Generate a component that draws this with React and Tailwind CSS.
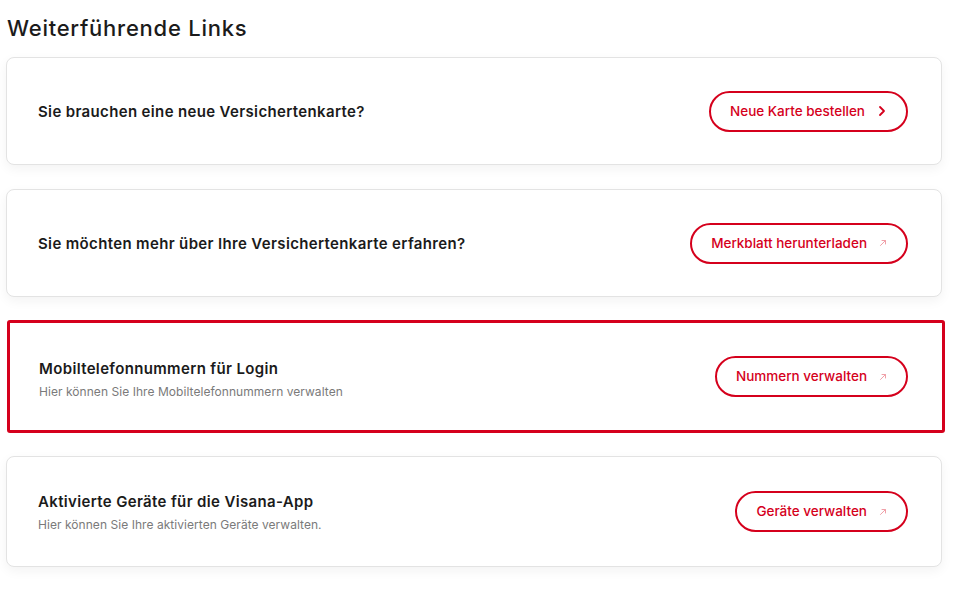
import React from "react";

const Chevron = () => (
  <svg width="10" height="12" viewBox="0 0 10 12" fill="none" className="ml-[12px]">
    <path d="M3 2 L7 6 L3 10" stroke="#d5001c" strokeWidth="1.8" strokeLinecap="round" strokeLinejoin="round" />
  </svg>
);

const External = () => (
  <svg width="8" height="8" viewBox="0 0 8 8" fill="none" className="ml-[12px]">
    <path d="M1.5 6.5 L6.5 1.5 M3 1.5 H6.5 V5" stroke="#f0a0a8" strokeWidth="1" strokeLinecap="round" />
  </svg>
);

const LinkButton = ({ label, external }) => (
  <button className="h-[41px] px-[19px] flex items-center rounded-full border-2 border-[#d5001c] bg-white text-[13.5px] font-medium text-[#d5001c] whitespace-nowrap">
    <span>{label}</span>
    {external ? <External /> : <Chevron />}
  </button>
);

const Card = ({ title, subtitle, button, external, highlight, tall }) => (
  <div
    className={
      highlight
        ? "ml-[1px] w-[938px] h-[113px] rounded-[3px] border-[3px] border-[#d5001c] bg-white flex items-center justify-between pl-[29px] pr-[34px]"
        : tall
        ? "w-[936px] h-[111px] rounded-[8px] border border-[#e3e3e3] bg-white shadow-[0_4px_12px_rgba(0,0,0,0.05)] flex items-center justify-between pl-[31px] pr-[33px]"
        : "w-[936px] h-[108px] rounded-[8px] border border-[#e3e3e3] bg-white shadow-[0_4px_12px_rgba(0,0,0,0.05)] flex items-center justify-between pl-[31px] pr-[33px]"
    }
  >
    <div className={highlight ? "flex flex-col gap-[5px] pt-[5px]" : "flex flex-col gap-[5px] pt-[1px]"}>
      <p className="text-[15px] font-semibold text-[#1b1b1b] leading-[20px] tracking-[0.35px]">{title}</p>
      {subtitle && (
        <p className="text-[12px] text-[#7a7a7a] leading-[16px] tracking-[0.05px]">{subtitle}</p>
      )}
    </div>
    <LinkButton label={button} external={external} />
  </div>
);

export default function App() {
  return (
    <div
      className="w-[960px] h-[592px] bg-white pl-[6px] pt-[14px]"
      style={{ fontFamily: "Inter, 'Noto Sans', sans-serif" }}
    >
      <h2 className="pl-[1px] text-[22px] font-medium text-[#1b1b1b] leading-[28px] tracking-[0.75px]">
        Weiterführende Links
      </h2>
      <div className="mt-[15px] flex flex-col gap-[24px]">
        <Card title="Sie brauchen eine neue Versichertenkarte?" button="Neue Karte bestellen" />
        <Card
          title="Sie möchten mehr über Ihre Versichertenkarte erfahren?"
          button="Merkblatt herunterladen"
          external
        />
        <div className="-my-[1px]">
          <Card
            title="Mobiltelefonnummern für Login"
            subtitle="Hier können Sie Ihre Mobiltelefonnummern verwalten"
            button="Nummern verwalten"
            external
            highlight
          />
        </div>
        <Card
          title="Aktivierte Geräte für die Visana-App"
          subtitle="Hier können Sie Ihre aktivierten Geräte verwalten."
          button="Geräte verwalten"
          external
          tall
        />
      </div>
    </div>
  );
}
